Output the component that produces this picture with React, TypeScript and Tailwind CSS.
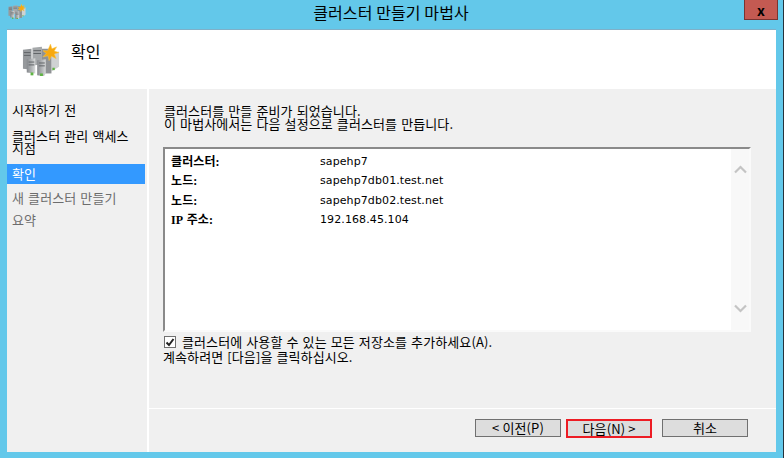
const font = "[font-family:'Noto_Sans_CJK_KR','Liberation_Sans',sans-serif]";

const ServerIcon = ({ size }: { size: number }) => (
  <svg width={size} height={size * 0.85} viewBox="0 0 40 34">
    <defs>
      <linearGradient id={`srv${size}`} x1="0" y1="0" x2="1" y2="0">
        <stop offset="0" stopColor="#85888c" />
        <stop offset="0.6" stopColor="#b5b8ba" />
        <stop offset="1" stopColor="#d8dada" />
      </linearGradient>
    </defs>
    <path d="M1 6l9-1v22l-9-1z" fill="#96999c" />
    <path d="M11 4l10-1v18l-10 2z" fill="#a5a8aa" />
    <path d="M31 10l8-2v16l-8 5z" fill="#cfd2d3" />
    <path d="M21 5h10v26H21z" fill="#8f9295" />
    <path d="M5 16l9-1v16l-9-1z" fill={`url(#srv${size})`} />
    <path d="M16 17l9-1v15l-2 3-7-1z" fill={`url(#srv${size})`} />
    <path d="M2 9h7M2 12h7M12 7h8M12 10h8M7 19h6M7 22h6M18 20h6M18 23h6" stroke="#5f6265" strokeWidth="1" />
    <rect x="9" y="30" width="3" height="3" fill="#5fb443" />
    <rect x="19" y="31" width="3" height="3" fill="#5fb443" />
    <rect x="32" y="25" width="2.5" height="2.5" fill="#5fb443" />
    <path
      d="M30 0l1.5 5 5-2-2.500 4.500 5 1.500-5 1.500 2 5-5-2.500-2.500 4.500-1-5-5.500 1 3.500-3.500-3.500-3 5 0z"
      fill="#f8a90f"
      stroke="#fbc94f"
      strokeWidth="0.5"
    />
  </svg>
);

const Chevron = ({ up }: { up?: boolean }) => (
  <svg width="13" height="9" viewBox="0 0 13 9" className={up ? "" : "rotate-180"}>
    <path d="M1 7.5l5.500-5.500 5.500 5.500" fill="none" stroke="#c4c4c4" strokeWidth="2.2" />
  </svg>
);

const steps = [
  { label: "시작하기 전", cls: "h-[22px] mt-[10px] mr-[2px] text-black items-center" },
  { label: "클러스터 관리 액세스 지점", cls: "h-[34px] mt-[9px] mr-[2px] text-black items-start" },
  { label: "확인", cls: "h-5 mr-[2px] bg-[#3399ff] text-white items-center" },
  { label: "새 클러스터 만들기", cls: "h-[26px] pt-[1px] mr-[2px] text-[#6d6d6d] items-center" },
  { label: "요약", cls: "h-5 mr-[2px] text-[#6d6d6d] items-center" },
];

const rows = [
  ["클러스터:", "sapehp7"],
  ["노드:", "sapehp7db01.test.net"],
  ["노드:", "sapehp7db02.test.net"],
  ["IP 주소:", "192.168.45.104"],
];

export default function App() {
  return (
    <div className={`${font} w-[784px] h-[458px] bg-[#63c8ea] flex flex-col overflow-hidden border-r border-[#26323a] text-[13px] leading-3 text-black [word-spacing:1px] tracking-[0.1px]`}>
      <div className="h-[29px] shrink-0 flex items-start relative">
        <div className="ml-[8px] mt-[4px]">
          <ServerIcon size={18} />
        </div>
        <div className="flex-1 text-center text-[16px] leading-[25px] pl-[12px] [word-spacing:0px]">클러스터 만들기 마법사</div>
        <div className="w-[34px] h-[20px] bg-[#c45a52] border border-[#7a3431] border-t-0 mr-[5px] flex items-center justify-center text-[14px] font-bold">
          x
        </div>
      </div>

      <div className="ml-[7px] w-[769px] h-[423px] bg-white flex flex-col border-t border-[#7fb0c8]">
        <div className="h-[59px] shrink-0 flex">
          <div className="ml-[15px] mt-[14px]">
            <ServerIcon size={38} />
          </div>
          <div className="ml-[11px] mt-[11px] text-[16px] leading-5">확인</div>
        </div>

        <div className="flex-1 flex gap-[2px]">
          <div className="w-[140px] bg-[#f0f0f0] flex flex-col">
            {steps.map((s) => (
              <div key={s.label} className={`${s.cls} px-[5px] flex leading-[12px]`}>
                {s.label}
              </div>
            ))}
          </div>

          <div className="flex-1 bg-[#f0f0f0] flex flex-col">
            <div className="pl-[14px] pr-[25px] flex-1 flex flex-col">
              <p className="mt-[15px] ml-[1px] leading-[13px]">
                클러스터를 만들 준비가 되었습니다.
                <br />
                이 마법사에서는 다음 설정으로 클러스터를 만듭니다.
              </p>
              <div className="mt-[17px] h-[185px] bg-white border-2 border-[#fafafa] border-t-[#8a8a8a] border-l-[#8a8a8a] flex">
                <div className="flex-1 pt-[7px] pl-[6px] flex flex-col gap-[7.4px]">
                  {rows.map(([k, v], i) => (
                    <div key={i} className="flex h-3 items-center text-[11px]">
                      <div className="w-[149px] text-xs font-bold font-['Liberation_Serif','Noto_Sans_CJK_KR',serif]">{k}</div>
                      <div className="font-['DejaVu_Sans',sans-serif]">{v}</div>
                    </div>
                  ))}
                </div>
                <div className="w-[18px] bg-[#f8f8f8] flex flex-col items-center justify-between pt-[16px] pb-[17px]">
                  <Chevron up />
                  <Chevron />
                </div>
              </div>
              <label className="mt-[3px] ml-[1px] flex items-center gap-[6px] h-[14px]">
                <span className="w-[12px] h-[12px] bg-white border border-[#707070] flex items-center justify-center">
                  <svg width="10" height="9" viewBox="0 0 10 9">
                    <path d="M1.500 4.500l2.500 2.500 4.500-6" fill="none" stroke="#222" strokeWidth="2" />
                  </svg>
                </span>
                클러스터에 사용할 수 있는 모든 저장소를 추가하세요(A).
              </label>
              <p className="mt-[1px] leading-[13px]">계속하려면 [다음]을 클릭하십시오.</p>
            </div>

            <div className="h-[44px] shrink-0 border-t border-white flex items-start justify-end pt-[10px] pr-[28px]">
              <button className="w-[86px] h-[18px] bg-[#dddddd] border border-[#707070] leading-[14px]">{"< 이전(P)"}</button>
              <button className="ml-[5px] w-[86px] h-[19px] bg-[#dddddd] border-2 border-[#ed1c24] leading-[13px]">{"다음(N) >"}</button>
              <button className="ml-[10px] w-[86px] h-[18px] bg-[#dddddd] border border-[#707070] leading-[14px]">취소</button>
            </div>
          </div>
        </div>
      </div>
    </div>
  );
}
